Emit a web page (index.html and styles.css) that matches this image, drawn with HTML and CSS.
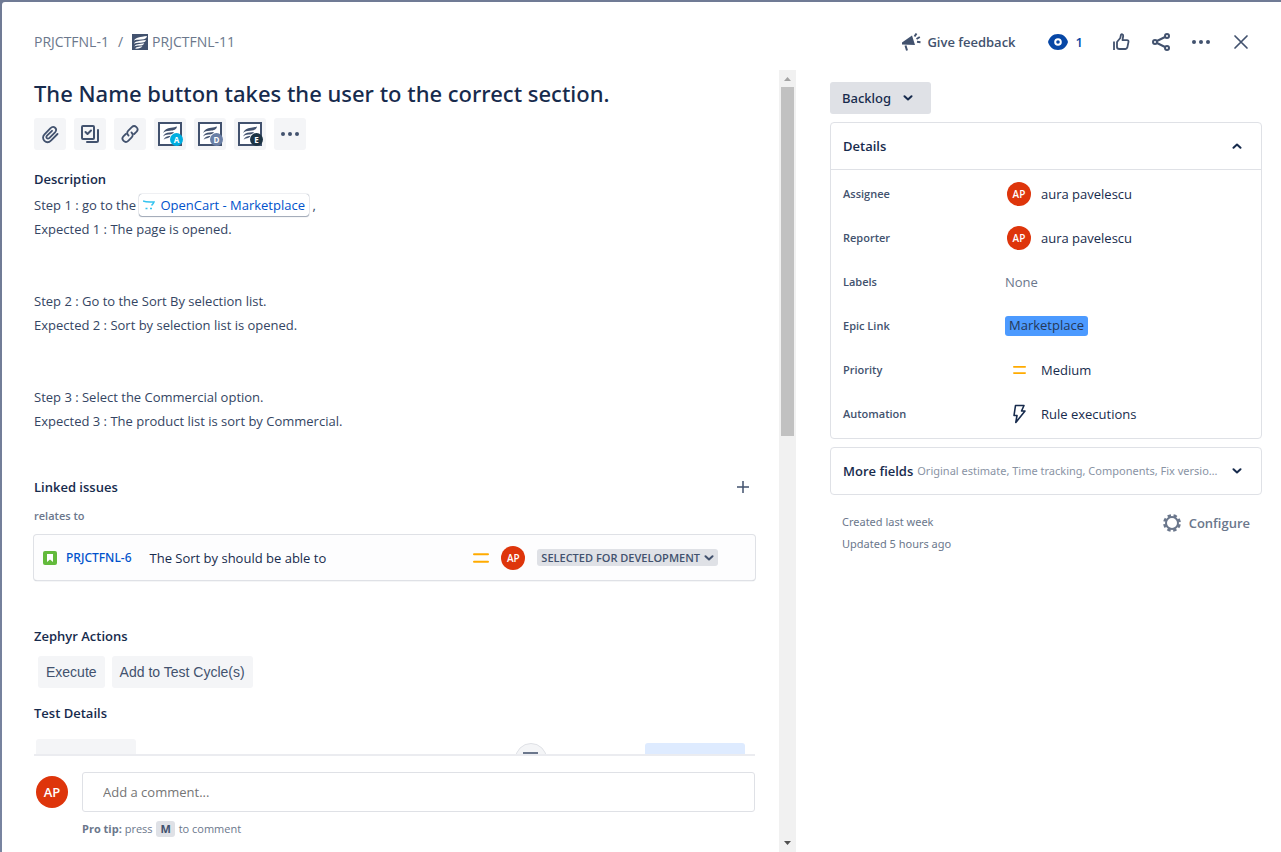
FILE: index.html
```html
<!DOCTYPE html>
<html lang="en">
<head>
<meta charset="utf-8">
<meta name="viewport" content="width=device-width, initial-scale=1">
<title>PRJCTFNL-11</title>
<link rel="stylesheet" href="styles.css">
</head>
<body>
<svg class="sprite" aria-hidden="true">
  <symbol id="wing" viewBox="0 0 16 16">
    <path d="M2 6.800C3.500 3.200 8 3 15 2c-.3 2.200-2 3.300-5.500 3.600C6 5.900 3.500 5.700 2 6.800z"/>
    <path d="M2 9.800C3.200 6.800 8 7 14 6c-.8 2.300-2.800 2.600-5.500 2.800C5.500 9 3.500 8.900 2 9.800z"/>
    <path d="M2.300 12.500C3.500 10 7.500 10 12.300 9.200c-1 2-2.600 2.300-4.800 2.400-2.200.1-3.800.1-5.200.9z"/>
    <path d="M3 14.600c1-1.800 4-1.900 7.500-2.400-1.300 2-4.500 2.800-7.500 2.400z"/>
  </symbol>
  <symbol id="chevron" viewBox="0 0 10 6"><path d="M1.500 1.200 5 4.500 8.500 1.200" fill="none" stroke="currentColor" stroke-width="2" stroke-linecap="round" stroke-linejoin="round"/></symbol>
  <symbol id="dots" viewBox="0 0 20 6"><circle cx="3" cy="3" r="2"/><circle cx="10" cy="3" r="2"/><circle cx="17" cy="3" r="2"/></symbol>
  <symbol id="medium" viewBox="0 0 16 10"><path d="M1 1.200h14M1 8.800h14" stroke="#ffab00" stroke-width="2" stroke-linecap="round"/></symbol>
  <symbol id="zephyr" viewBox="0 0 24 24">
    <path d="M1 1h22v22H1z" fill="#fff" stroke="#42526e" stroke-width="2"/>
    <path d="M5 11c1.500-3.500 4-5 8-5.300 2.500-.2 4.500-.7 6-1.200-.5 3-3 4-7 4.200C9 8.900 6.500 9.300 5 11z" fill="#42526e"/>
    <path d="M5 14.500c1.300-3 3.500-3.800 6.500-4l4.500-.6c-1 2-3 2.400-5.500 2.600-2.300.2-4 .7-5.500 2z" fill="#42526e"/>
    <path d="M5.500 18c1-2.800 3-3.800 7-4.200-1 1.900-2 2.200-3.500 2.400-1.500.2-2.500.7-3.500 1.800z" fill="#42526e"/>
  </symbol>
</svg>
<main class="modal">
  <header class="topbar">
    <nav class="crumbs" aria-label="Breadcrumb">
      <a href="#">PRJCTFNL-1</a>
      <span class="slash">/</span>
      <a href="#" class="crumb-current"><span class="issue-type"><svg width="16" height="16"><use href="#wing"/></svg></span>PRJCTFNL-11</a>
    </nav>
    <div class="actions">
      <button class="plain feedback"><svg width="20" height="20" viewBox="0 0 20 20" fill="none" stroke="currentColor" stroke-width="2"><path d="M11 3.500 14 13 1 12.500v-2z" fill="currentColor" stroke="none"/><path d="m4.500 13.500 1.500 5M13.500 4.500l2-3M15.500 7l3.300-2M16 9.800l3.500.4"/></svg>Give feedback</button>
      <button class="plain watch" aria-label="Watchers: 1"><svg width="20" height="16" viewBox="0 0 20 16"><path d="M10 0C4.500 0 1.500 3.500 0 8c1.500 4.500 4.500 8 10 8s8.500-3.500 10-8c-1.500-4.500-4.500-8-10-8z" fill="currentColor"/><circle cx="10" cy="8" r="2.800" fill="none" stroke="#fff" stroke-width="2"/></svg>1</button>
      <button class="plain icon" aria-label="Like"><svg width="18" height="18" viewBox="0 0 18 18" fill="none" stroke="currentColor" stroke-width="1.800" stroke-linejoin="round"><path d="M2 8.500V17M5 9l3.300-4 .6-3c.3-1.300 2.600-.8 2.300 1L10.500 7.200H15c1.100 0 1.700.7 1.500 1.700l-1.200 5.700c-.3 1-.8 1.400-1.800 1.400H7.500c-1.500 0-2.500-.7-2.500-2z"/></svg></button>
      <button class="plain icon" aria-label="Share"><svg width="18" height="18" viewBox="0 0 18 18" fill="none" stroke="currentColor" stroke-width="2"><circle cx="3" cy="9" r="2"/><circle cx="15" cy="3" r="2"/><circle cx="15" cy="15" r="2"/><path d="m5 8 8-4M5 10l8 4"/></svg></button>
      <button class="plain icon" aria-label="Actions"><svg width="20" height="6" fill="currentColor"><use href="#dots"/></svg></button>
      <button class="plain icon" aria-label="Close"><svg width="16" height="16" viewBox="0 0 16 16" stroke="currentColor" stroke-width="1.700" stroke-linecap="round"><path d="m2 2 12 12M14 2 2 14"/></svg></button>
    </div>
  </header>
  <div class="columns">
    <section class="primary">
      <div class="content">
        <h1>The Name button takes the user to the correct section.</h1>
        <div class="toolbar">
          <button class="tool" aria-label="Attach"><svg width="20" height="20" viewBox="0 0 20 20" fill="none" stroke="currentColor" stroke-width="1.800" stroke-linecap="round"><path d="m17.500 10-6.300 6.300c-4.800 4.800-11-1.500-6.700-6l5.800-6c3.600-3.600 7.600.8 4.700 4l-5.500 5.500c-2 2-4.300-.3-2.500-2.200L12 6.800"/></svg></button>
          <button class="tool" aria-label="Add a child issue"><svg width="18" height="18" viewBox="0 0 18 18" fill="none" stroke="currentColor" stroke-width="2" stroke-linecap="round" stroke-linejoin="round"><rect x="1" y="1" width="12" height="13" rx="1"/><path d="m4.500 7 2 2L10 5.500M17 5v10.500q0 1.500-1.500 1.500H6"/></svg></button>
          <button class="tool" aria-label="Link issue"><svg width="20" height="20" viewBox="0 0 20 20" fill="none" stroke="currentColor" stroke-width="1.800" stroke-linecap="round"><path d="M8.500 11.500c-1.700-1.700-1.500-3.500-.2-4.800l3.500-3.500c3-3 7.700 1.300 4.800 4.500L14.200 10M11.500 8.500c1.700 1.700 1.500 3.500.2 4.800l-3.500 3.500c-3 3-7.700-1.300-4.800-4.500L5.800 10"/></svg></button>
          <button class="tool" aria-label="Zephyr A"><svg width="24" height="24"><use href="#zephyr"/></svg><span class="badge badge-a">A</span></button>
          <button class="tool" aria-label="Zephyr D"><svg width="24" height="24"><use href="#zephyr"/></svg><span class="badge badge-d">D</span></button>
          <button class="tool" aria-label="Zephyr E"><svg width="24" height="24"><use href="#zephyr"/></svg><span class="badge badge-e">E</span></button>
          <button class="tool" aria-label="More"><svg width="20" height="6" fill="currentColor"><use href="#dots"/></svg></button>
        </div>
        <h2>Description</h2>
        <div class="description">
          <p>Step 1 : go to the <a class="smart-link" href="#"><svg width="12" height="10" viewBox="0 0 12 10" fill="none" stroke="#34c3ef" stroke-width="1.500"><path d="M0 1c3 1.500 7 1 11 1-.5 1.500-1.500 2.500-2.500 3.500"/><path d="M2.500 8.500h2M7 8.500h2"/></svg>OpenCart - Marketplace</a> ,<br>Expected 1 : The page is opened.</p>
          <p>Step 2 : Go to the Sort By selection list.<br>Expected 2 : Sort by selection list is opened.</p>
          <p>Step 3 : Select the Commercial option.<br>Expected 3 : The product list is sort by Commercial.</p>
        </div>
        <div class="section-head">
          <h2>Linked issues</h2>
          <button class="plain" aria-label="Link an issue"><svg width="12" height="12" viewBox="0 0 12 12" stroke="currentColor" stroke-width="1.500"><path d="M6 0v12M0 6h12"/></svg></button>
        </div>
        <h3>relates to</h3>
        <div class="linked">
          <svg width="14" height="14" viewBox="0 0 14 14"><rect width="14" height="14" rx="2" fill="#63ba3c"/><path d="M4 3h6v8L7 8.500 4 11z" fill="#fff"/></svg>
          <a href="#">PRJCTFNL-6</a>
          <span class="linked-title">The Sort by should be able to</span>
          <svg width="16" height="12"><use href="#medium"/></svg>
          <span class="avatar">AP</span>
          <button class="status">SELECTED FOR DEVELOPMENT<svg width="10" height="6"><use href="#chevron"/></svg></button>
        </div>
        <h2>Zephyr Actions</h2>
        <div class="zephyr-actions"><button>Execute</button><button>Add to Test Cycle(s)</button></div>
        <h2>Test Details</h2>
        <div class="test-details"><span class="ghost"></span><span class="round"></span><span class="ghost blue"></span></div>
      </div>
      <footer class="comment">
        <span class="avatar large">AP</span>
        <div class="comment-body">
          <input type="text" placeholder="Add a comment..." aria-label="Add a comment">
          <p><strong>Pro tip:</strong> press <kbd>M</kbd> to comment</p>
        </div>
      </footer>
    </section>
    <div class="scrollbar" aria-hidden="true">
      <svg width="7" height="4" viewBox="0 0 7 4"><path d="M0 4 3.500 0 7 4z" fill="#a3a3a3"/></svg>
      <span class="thumb"></span>
      <svg width="7" height="4" viewBox="0 0 7 4"><path d="M0 0h7L3.500 4z" fill="#505050"/></svg>
    </div>
    <aside class="side">
      <button class="backlog">Backlog<svg width="10" height="6"><use href="#chevron"/></svg></button>
      <section class="panel">
        <button class="panel-head" aria-expanded="true"><span>Details</span><svg class="up" width="10" height="6"><use href="#chevron"/></svg></button>
        <dl>
          <dt>Assignee</dt><dd><span class="slot"><span class="avatar">AP</span></span>aura pavelescu</dd>
          <dt>Reporter</dt><dd><span class="slot"><span class="avatar">AP</span></span>aura pavelescu</dd>
          <dt>Labels</dt><dd class="muted">None</dd>
          <dt>Epic Link</dt><dd><a class="epic" href="#">Marketplace</a></dd>
          <dt>Priority</dt><dd><span class="slot"><svg width="13" height="10"><use href="#medium"/></svg></span>Medium</dd>
          <dt>Automation</dt><dd><span class="slot"><svg width="14" height="20" viewBox="0 0 14 20" fill="none" stroke="#172b4d" stroke-width="1.600" stroke-linejoin="round"><path d="M3.500 1.500h8.500L9.500 7H13L3.800 18.500l1.200-7H2z"/></svg></span>Rule executions</dd>
        </dl>
      </section>
      <section class="panel">
        <button class="panel-head" aria-expanded="false"><span>More fields</span><small>Original estimate, Time tracking, Components, Fix versions</small><svg width="10" height="6"><use href="#chevron"/></svg></button>
      </section>
      <div class="meta">
        <p>Created last week<br>Updated 5 hours ago</p>
        <button class="plain configure"><svg width="18" height="18" viewBox="0 0 18 18" fill="none" stroke="currentColor"><circle cx="9" cy="9" r="6" stroke-width="2"/><circle cx="9" cy="9" r="7.600" stroke-width="2.600" stroke-dasharray="3.400 2.570" stroke-dashoffset="-1.300"/></svg>Configure</button>
      </div>
    </aside>
  </div>
</main>
</body>
</html>
```
FILE: styles.css
```css
* { box-sizing: border-box; }
body {
  margin: 0;
  height: 100vh;
  padding: 2px 0 0 2px;
  overflow: hidden;
  background: linear-gradient(#707b95, #707b95 26%, #7884a0);
  color: #172b4d;
  font: 13px/24px "Open Sans", "Noto Sans", sans-serif;
}
h1, h2, h3, p, dl, dd { margin: 0; }
a { color: #0052cc; text-decoration: none; }
button { border: 0; padding: 0; font: inherit; color: inherit; cursor: pointer; }
svg { display: block; flex: none; }
.sprite { position: absolute; width: 0; height: 0; }

.modal { display: flex; flex-direction: column; height: 100%; background: #fff; border-top-left-radius: 3px; }
.topbar { display: flex; justify-content: space-between; align-items: center; height: 68px; flex: none; padding: 12px 32px 0; }
.crumbs, .crumb-current { display: flex; align-items: center; }
.crumbs { font-size: 14px; color: #6b778c; }
.crumbs a { color: #6b778c; }
.slash { margin: 0 9px; }
.crumb-current { gap: 4px; }
.issue-type { width: 16px; height: 16px; background: #42526e; fill: #fff; }
.actions { display: flex; align-items: center; color: #42526e; }
.plain { display: flex; align-items: center; justify-content: center; background: none; }
.feedback { gap: 6px; margin-right: 32px; font-weight: 600; }
.watch { gap: 8px; margin-right: 14px; color: #0747a6; font-weight: 600; }
.icon { width: 32px; height: 32px; margin-left: 8px; }
.icon:last-child { margin-right: -8px; }

.columns { display: flex; flex: 1; min-height: 0; }
.primary { flex: 721 1 0; min-width: 0; display: flex; flex-direction: column; padding: 0 24px 0 32px; }
.content { flex: 1; min-height: 0; margin: 0 -1px; padding: 0 1px; overflow: hidden; }
h1 { font: 500 22px/28px "Noto Sans", "Open Sans", sans-serif; margin-top: 9px; }
h2 { font-size: 13px; line-height: 20px; font-weight: 600; }
h3 { font-size: 11px; line-height: 16px; font-weight: 600; color: #6b778c; margin-top: 11px; }
.toolbar { display: flex; gap: 8px; margin: 11px 0 19px; }
.tool { position: relative; display: grid; place-items: center; width: 32px; height: 32px; background: #f4f5f7; border-radius: 3px; color: #42526e; }
.badge { position: absolute; right: 3px; bottom: 4px; width: 13px; height: 13px; border-radius: 50%; color: #fff; font-size: 8px; line-height: 13px; font-weight: 700; }
.badge-a { background: #00aee0; }
.badge-d { background: #6a7fa5; }
.badge-e { background: #1d3444; }
.description { display: grid; gap: 48px; margin-top: 4px; color: #344563; }
.smart-link { display: inline-flex; align-items: center; gap: 5px; height: 22px; line-height: 20px; padding: 0 4px; border-radius: 3px; box-shadow: 0 0 1px #5e6c84, 0 1px 1px #a5adba; }
.section-head { display: flex; justify-content: space-between; align-items: center; margin-top: 44px; padding-right: 6px; color: #42526e; }
.section-head h2 { color: #172b4d; }
.linked { display: flex; align-items: center; height: 45px; margin: 11px 0 46px; padding: 0 37px 0 9px; background: #fdfdfe; border-radius: 3px; box-shadow: 0 0 0 1px #dfe1e6, 0 1px 1px #97a0af; }
.linked a { font: 500 12px/24px "Noto Sans", "Open Sans", sans-serif; margin: 0 18px 0 9px; }
.linked-title { flex: 1; }
.avatar { display: grid; place-items: center; width: 24px; height: 24px; border-radius: 50%; background: #de350b; color: #fff; font-size: 10px; line-height: 12px; font-weight: 600; }
.linked .avatar { margin: 0 12px; }
.status { display: flex; align-items: center; gap: 4px; height: 17px; padding: 0 4px; border-radius: 3px; background: #dfe1e6; color: #42526e; font-size: 11px; line-height: 16px; font-weight: 600; }
.zephyr-actions { display: flex; gap: 7px; margin: 10px 4px 15px; }
.zephyr-actions button { height: 32px; padding: 0 8px; background: #f4f5f7; border-radius: 3px; color: #42526e; font: 14px "Liberation Sans", Arial, sans-serif; }
.test-details { display: flex; justify-content: space-between; margin: 16px 10px 0 2px; }
.ghost { width: 100px; height: 32px; background: #f4f5f7; border-radius: 3px; }
.ghost.blue { margin-top: 4px; background: #deebff; }
.round { display: grid; justify-items: center; width: 32px; height: 32px; margin: 4px 0 0 280px; border: 1px solid #dfe1e6; border-radius: 50%; background: #f4f5f7; }
.round::before { content: ""; width: 11px; height: 12px; margin-top: 8px; border: 2px solid #6b778c; }

.comment { display: flex; gap: 14px; padding: 16px 0 15px 2px; border-top: 2px solid #ebecf0; }
.avatar.large { width: 32px; height: 32px; margin-top: 4px; font-size: 13px; flex: none; }
.comment-body { flex: 1; }
.comment input { display: block; width: 100%; height: 40px; padding: 0 20px; border: 1px solid #dfe1e6; border-radius: 3px; font: inherit; }
.comment input::placeholder { color: #757575; opacity: 1; }
.comment p { margin-top: 9px; font-size: 11px; line-height: 16px; color: #6b778c; }
kbd { display: inline-block; padding: 0 4px; margin: 0 1px; border-radius: 3px; background: #dfe1e6; color: #42526e; font: 700 11px/16px "Open Sans", sans-serif; }

.scrollbar { display: flex; flex-direction: column; align-items: center; width: 17px; flex: none; padding: 7px 0; background: #f1f1f1; }
.thumb { width: 13px; height: 349px; margin: 6px 0 auto; background: #c1c1c1; }

.side { flex: 432 1 0; min-width: 0; padding: 12px 19px 0 34px; }
.backlog { display: flex; align-items: center; gap: 12px; height: 32px; padding: 0 18px 0 12px; border-radius: 3px; background: #dfe1e6; font-family: "Noto Sans", "Open Sans", sans-serif; font-weight: 500; }
.panel { margin-top: 8px; border: 1px solid #dfe1e6; border-radius: 4px; }
.panel-head { display: flex; align-items: center; justify-content: space-between; width: 100%; height: 46px; padding: 0 19px 0 12px; background: none; font-weight: 600; }
.panel-head small { flex: 1; min-width: 0; margin: 0 14px 0 4px; overflow: hidden; text-overflow: ellipsis; white-space: nowrap; text-align: left; font: 11px/24px "Noto Sans", "Open Sans", sans-serif; color: #8993a4; }
.up { transform: rotate(180deg); }
dl { display: grid; grid-template-columns: 162px 1fr; grid-auto-rows: 44px; align-items: center; padding: 2px 12px; border-top: 1px solid #dfe1e6; }
dt { font-size: 11px; font-weight: 600; color: #42526e; }
dd { display: flex; align-items: center; }
.slot { display: grid; place-items: center; width: 28px; margin-right: 8px; }
.muted { color: #6b778c; }
.epic { height: 20px; line-height: 19px; padding: 0 4px; border-radius: 3px; background: #4c9aff; color: #253858; }
.meta { display: flex; justify-content: space-between; align-items: flex-start; padding: 16px 12px; color: #6b778c; }
.meta p { font: 11px/22px "Noto Sans", "Open Sans", sans-serif; }
.configure { gap: 8px; font-weight: 600; }
```
